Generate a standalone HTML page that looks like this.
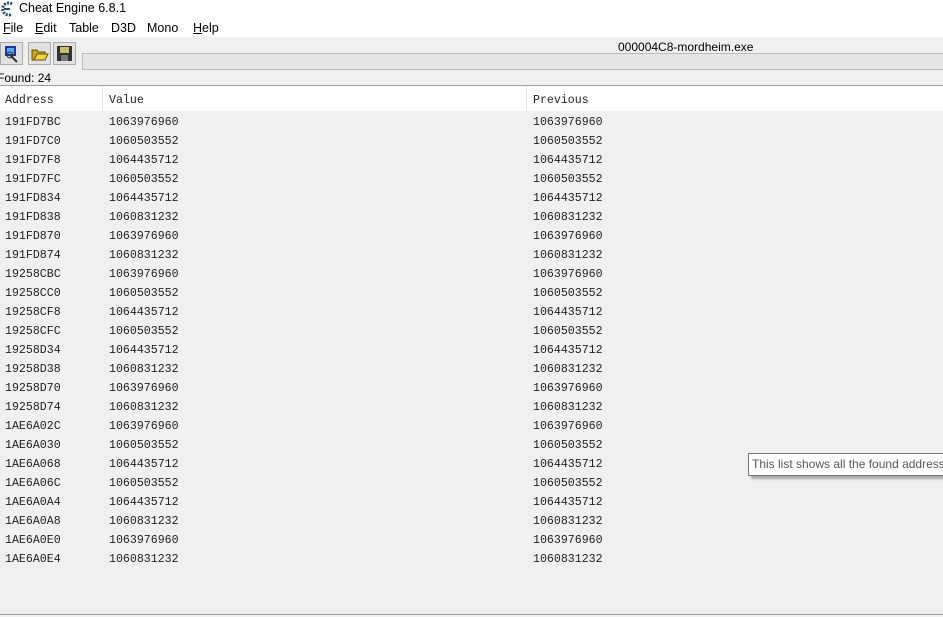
<!DOCTYPE html>
<html><head><style>
body{margin:0;width:943px;height:617px;background:#f0f0f0;position:relative;overflow:hidden;font-family:"Liberation Sans",sans-serif;}
.a{position:absolute}
.mono{font-family:"Liberation Mono",monospace;font-size:11.6px;color:#222}
.btn{position:absolute;top:42px;width:21px;height:21px;border:1px solid #adadad;background:#e1e1e1}
.row{position:absolute;left:0;width:943px;height:19px;line-height:19px}
.row span{position:absolute}
.m{position:absolute;top:21px;font-size:12.5px;color:#000}
</style></head><body>
<div class="a" style="left:0;top:0;width:943px;height:37px;background:#fff"></div>
<svg class="a" style="left:0;top:1px" width="14" height="16" viewBox="0 0 14 16"><path d="M12 3 A6 6 0 1 0 12 13" stroke="#2a4a6a" stroke-width="3" fill="none" stroke-dasharray="2 1.2"/><path d="M4 8 H10" stroke="#2a4a6a" stroke-width="2"/></svg>
<div class="a" style="left:19px;top:1px;font-size:12.5px;color:#000">Cheat Engine 6.8.1</div>
<span class="m" style="left:3px"><u>F</u>ile</span>
<span class="m" style="left:35px"><u>E</u>dit</span>
<span class="m" style="left:69px">Table</span>
<span class="m" style="left:111px">D3D</span>
<span class="m" style="left:147px">Mono</span>
<span class="m" style="left:193px"><u>H</u>elp</span>
<div class="btn" style="left:0"><svg width="21" height="21"><rect x="4" y="3" width="11" height="10" fill="#1a3a9a"/><rect x="6" y="5" width="7" height="6" fill="#5af"/><path d="M9 12 L16 19" stroke="#333" stroke-width="2"/><circle cx="9" cy="12" r="3" fill="none" stroke="#333"/></svg></div>
<div class="btn" style="left:28px"><svg width="21" height="21"><path d="M3 7 H8 L9 9 H16 V17 H3Z" fill="#c9a516" stroke="#6a5500"/><path d="M5 17 L8 11 H19 L16 17Z" fill="#f0d24a" stroke="#6a5500"/></svg></div>
<div class="btn" style="left:53px"><svg width="21" height="21"><rect x="3" y="3" width="15" height="15" fill="#333"/><rect x="6" y="4" width="9" height="6" fill="#c8c070"/><rect x="7" y="12" width="7" height="6" fill="#777"/></svg></div>
<div class="a" style="left:618px;top:40px;font-size:12px;color:#000">000004C8-mordheim.exe</div>
<div class="a" style="left:82px;top:53px;width:861px;height:15px;border:1px solid #bcbcbc;border-right:none;background:#e6e6e6"></div>
<div class="a" style="left:0;top:71px;font-size:12px;color:#000;margin-left:-3px">Found: 24</div>
<div class="a" style="left:0;top:85px;width:943px;height:1px;background:#a0a0a0"></div>
<div class="a" style="left:0;top:86px;width:943px;height:25px;background:#fff"></div>
<div class="a" style="left:102px;top:86px;width:1px;height:25px;background:#e5e5e5"></div>
<div class="a" style="left:526px;top:86px;width:1px;height:25px;background:#e5e5e5"></div>
<div class="row mono" style="top:91px"><span style="left:5px">Address</span><span style="left:109px">Value</span><span style="left:533px">Previous</span></div>
<div class="a" style="left:0;top:614px;width:943px;height:1px;background:#a0a0a0"></div>
<div class="a" style="left:748px;top:453px;width:200px;height:21px;border:1px solid #767676;background:#fff;box-shadow:3px 3px 2px #aaa;font-size:12px;line-height:21px;padding-left:3px;color:#575757;white-space:nowrap">This list shows all the found addresses</div>
<div class="a mono" style="left:0;top:113px;width:943px">
<div class="row" style="top:0"><span style="left:5px">191FD7BC</span><span style="left:109px">1063976960</span><span style="left:533px">1063976960</span></div>
<div class="row" style="top:19px"><span style="left:5px">191FD7C0</span><span style="left:109px">1060503552</span><span style="left:533px">1060503552</span></div>
<div class="row" style="top:38px"><span style="left:5px">191FD7F8</span><span style="left:109px">1064435712</span><span style="left:533px">1064435712</span></div>
<div class="row" style="top:57px"><span style="left:5px">191FD7FC</span><span style="left:109px">1060503552</span><span style="left:533px">1060503552</span></div>
<div class="row" style="top:76px"><span style="left:5px">191FD834</span><span style="left:109px">1064435712</span><span style="left:533px">1064435712</span></div>
<div class="row" style="top:95px"><span style="left:5px">191FD838</span><span style="left:109px">1060831232</span><span style="left:533px">1060831232</span></div>
<div class="row" style="top:114px"><span style="left:5px">191FD870</span><span style="left:109px">1063976960</span><span style="left:533px">1063976960</span></div>
<div class="row" style="top:133px"><span style="left:5px">191FD874</span><span style="left:109px">1060831232</span><span style="left:533px">1060831232</span></div>
<div class="row" style="top:152px"><span style="left:5px">19258CBC</span><span style="left:109px">1063976960</span><span style="left:533px">1063976960</span></div>
<div class="row" style="top:171px"><span style="left:5px">19258CC0</span><span style="left:109px">1060503552</span><span style="left:533px">1060503552</span></div>
<div class="row" style="top:190px"><span style="left:5px">19258CF8</span><span style="left:109px">1064435712</span><span style="left:533px">1064435712</span></div>
<div class="row" style="top:209px"><span style="left:5px">19258CFC</span><span style="left:109px">1060503552</span><span style="left:533px">1060503552</span></div>
<div class="row" style="top:228px"><span style="left:5px">19258D34</span><span style="left:109px">1064435712</span><span style="left:533px">1064435712</span></div>
<div class="row" style="top:247px"><span style="left:5px">19258D38</span><span style="left:109px">1060831232</span><span style="left:533px">1060831232</span></div>
<div class="row" style="top:266px"><span style="left:5px">19258D70</span><span style="left:109px">1063976960</span><span style="left:533px">1063976960</span></div>
<div class="row" style="top:285px"><span style="left:5px">19258D74</span><span style="left:109px">1060831232</span><span style="left:533px">1060831232</span></div>
<div class="row" style="top:304px"><span style="left:5px">1AE6A02C</span><span style="left:109px">1063976960</span><span style="left:533px">1063976960</span></div>
<div class="row" style="top:323px"><span style="left:5px">1AE6A030</span><span style="left:109px">1060503552</span><span style="left:533px">1060503552</span></div>
<div class="row" style="top:342px"><span style="left:5px">1AE6A068</span><span style="left:109px">1064435712</span><span style="left:533px">1064435712</span></div>
<div class="row" style="top:361px"><span style="left:5px">1AE6A06C</span><span style="left:109px">1060503552</span><span style="left:533px">1060503552</span></div>
<div class="row" style="top:380px"><span style="left:5px">1AE6A0A4</span><span style="left:109px">1064435712</span><span style="left:533px">1064435712</span></div>
<div class="row" style="top:399px"><span style="left:5px">1AE6A0A8</span><span style="left:109px">1060831232</span><span style="left:533px">1060831232</span></div>
<div class="row" style="top:418px"><span style="left:5px">1AE6A0E0</span><span style="left:109px">1063976960</span><span style="left:533px">1063976960</span></div>
<div class="row" style="top:437px"><span style="left:5px">1AE6A0E4</span><span style="left:109px">1060831232</span><span style="left:533px">1060831232</span></div>
</div>
</body></html>
